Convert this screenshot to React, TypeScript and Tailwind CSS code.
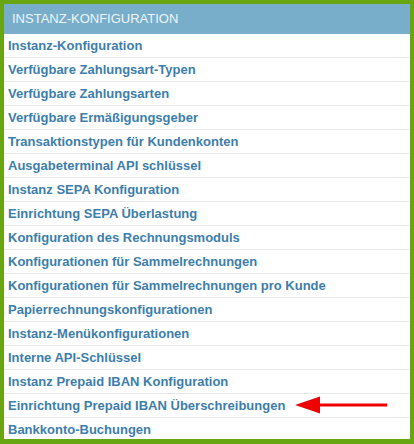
import React from "react"

const items = [
  "Instanz-Konfiguration",
  "Verfügbare Zahlungsart-Typen",
  "Verfügbare Zahlungsarten",
  "Verfügbare Ermäßigungsgeber",
  "Transaktionstypen für Kundenkonten",
  "Ausgabeterminal API schlüssel",
  "Instanz SEPA Konfiguration",
  "Einrichtung SEPA Überlastung",
  "Konfiguration des Rechnungsmoduls",
  "Konfigurationen für Sammelrechnungen",
  "Konfigurationen für Sammelrechnungen pro Kunde",
  "Papierrechnungskonfigurationen",
  "Instanz-Menükonfigurationen",
  "Interne API-Schlüssel",
  "Instanz Prepaid IBAN Konfiguration",
  "Einrichtung Prepaid IBAN Überschreibungen",
  "Bankkonto-Buchungen"
]

function ArrowMark() {
  return (
    <svg width="94" height="18" viewBox="0 0 94 18" className="absolute left-[290px] top-[2px]">
      <line x1="24" y1="9" x2="93" y2="9" stroke="#ee0000" strokeWidth="3" />
      <polygon points="1,9 26,0.5 26,17.5" fill="#ee0000" />
    </svg>
  )
}

export default function App() {
  return (
    <div
      className="h-[444px] w-[414px] overflow-hidden border-[4px] border-b-[5px] border-[#68a611] bg-white"
      style={{ fontFamily: '"Liberation Sans", Arial, sans-serif' }}
    >
      <div className="flex h-[30px] items-center bg-[#79aeca] pl-[8px] text-[13px] text-[#eef5f9]">
        INSTANZ-KONFIGURATION
      </div>
      <ul>
        {items.map((label, i) => (
          <li
            key={label}
            className="relative flex h-[24px] items-center border-b border-[#e8e8e8] pl-[4px] text-[13px] font-bold text-[#3d7eaa]"
          >
            <span>{label}</span>
            {i === 15 ? <ArrowMark /> : null}
          </li>
        ))}
      </ul>
    </div>
  )
}
